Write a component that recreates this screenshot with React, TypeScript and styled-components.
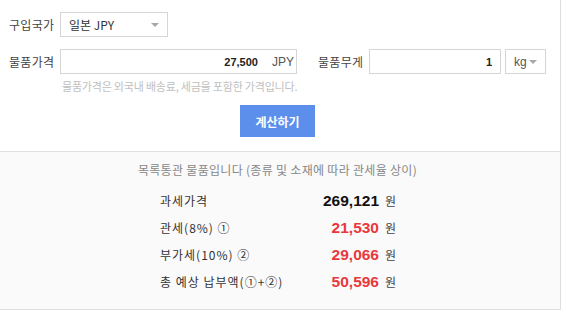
import React from "react";
import styled, { createGlobalStyle } from "styled-components";

const Global = createGlobalStyle`
  html, body { margin: 0; padding: 0; background: #fff; }
  body { font-family: "Noto Sans CJK KR", "Liberation Sans", sans-serif; color: #333; }
`;

const Card = styled.div`
  width: 560px;
  margin: -1px 0 0 -1px;
  border: 1px solid #dedede;
  background: #fff;
`;

const Top = styled.div`
  width: 537px;
  padding: 12px 0 14px 9px;
  display: flex;
  flex-direction: column;
`;

const Row = styled.div<{ $mt?: number }>`
  display: flex;
  align-items: center;
  height: 25px;
  margin-top: ${(p) => p.$mt ?? 0}px;
`;

const Label = styled.div<{ $ml?: number }>`
  width: 51px;
  margin-left: ${(p) => p.$ml ?? 0}px;
  font-size: 12px;
  line-height: 16px;
  color: #444;
  letter-spacing: 0.3px;
`;

const SelectBox = styled.div<{ $w: number; $ml?: number }>`
  box-sizing: border-box;
  width: ${(p) => p.$w}px;
  height: 25px;
  margin-left: ${(p) => p.$ml ?? 0}px;
  border: 1px solid #d6d6d6;
  display: flex;
  align-items: center;
  justify-content: space-between;
  padding: 0 8px 0 8px;
  font-size: 12px;
  color: #333;
`;

const Caret = styled.span`
  width: 0;
  height: 0;
  border-left: 4px solid transparent;
  border-right: 4px solid transparent;
  border-top: 4px solid #a8a8a8;
`;

const InputBox = styled.div<{ $w: number; $pr: number }>`
  box-sizing: border-box;
  width: ${(p) => p.$w}px;
  height: 25px;
  border: 1px solid #d6d6d6;
  display: flex;
  align-items: center;
  justify-content: flex-end;
  padding-right: ${(p) => p.$pr}px;
  gap: 14px;
`;

const InputValue = styled.span`
  font-family: "Liberation Sans", sans-serif;
  font-weight: bold;
  font-size: 11px;
  color: #222;
`;

const Unit = styled.span`
  font-family: "Liberation Sans", sans-serif;
  font-size: 12px;
  color: #555;
`;

const Hint = styled.div`
  margin: 5px 0 0 53px;
  font-size: 11px;
  line-height: 14px;
  color: #c0c0c0;
  letter-spacing: -0.2px;
`;

const ButtonRow = styled.div`
  display: flex;
  justify-content: center;
  margin-top: 12px;
`;

const CalcButton = styled.button`
  width: 75px;
  height: 32px;
  border: none;
  background: #5c8fec;
  color: #fff;
  font-family: "Noto Sans CJK KR", sans-serif;
  font-size: 12px;
  font-weight: bold;
  padding: 0;
`;

const Bottom = styled.div`
  background: #fafafa;
  border-top: 1px solid #e0e0e0;
  padding: 10px 0 14px 9px;
`;

const Notice = styled.div`
  width: 537px;
  text-align: center;
  font-size: 12px;
  line-height: 16px;
  color: #888;
  letter-spacing: 0.3px;
`;

const Results = styled.div`
  margin: 9px 0 0 151px;
  display: grid;
  grid-template-columns: 130px 89px max-content;
  grid-auto-rows: 27px;
  align-items: center;
  justify-content: start;
`;

const ResultLabel = styled.div`
  font-size: 12px;
  line-height: 16px;
  color: #333;
  letter-spacing: 1px;
`;

const ResultValue = styled.div<{ $red?: boolean }>`
  text-align: right;
  font-family: "Liberation Sans", sans-serif;
  font-weight: bold;
  font-size: 15.5px;
  color: ${(p) => (p.$red ? "#e8383d" : "#111")};
`;

const Won = styled.div`
  margin-left: 6px;
  font-size: 12px;
  line-height: 16px;
  color: #444;
`;

const rows = [
  { label: "과세가격", value: "269,121", red: false },
  { label: "관세(8%) ①", value: "21,530", red: true },
  { label: "부가세(10%) ②", value: "29,066", red: true },
  { label: "총 예상 납부액(①+②)", value: "50,596", red: true },
];

export default function App() {
  return (
    <>
      <Global />
      <Card>
        <Top>
          <Row>
            <Label>구입국가</Label>
            <SelectBox $w={108}>
              <span>일본 JPY</span>
              <Caret />
            </SelectBox>
          </Row>
          <Row $mt={12}>
            <Label>물품가격</Label>
            <InputBox $w={237} $pr={2}>
              <InputValue>27,500</InputValue>
              <Unit>JPY</Unit>
            </InputBox>
            <Label $ml={21}>물품무게</Label>
            <InputBox $w={132} $pr={8}>
              <InputValue>1</InputValue>
            </InputBox>
            <SelectBox $w={41} $ml={4}>
              <Unit>kg</Unit>
              <Caret />
            </SelectBox>
          </Row>
          <Hint>물품가격은 외국내 배송료, 세금을 포함한 가격입니다.</Hint>
          <ButtonRow>
            <CalcButton>계산하기</CalcButton>
          </ButtonRow>
        </Top>
        <Bottom>
          <Notice>목록통관 물품입니다 (종류 및 소재에 따라 관세율 상이)</Notice>
          <Results>
            {rows.map((r) => (
              <React.Fragment key={r.label}>
                <ResultLabel>{r.label}</ResultLabel>
                <ResultValue $red={r.red}>{r.value}</ResultValue>
                <Won>원</Won>
              </React.Fragment>
            ))}
          </Results>
        </Bottom>
      </Card>
    </>
  );
}
